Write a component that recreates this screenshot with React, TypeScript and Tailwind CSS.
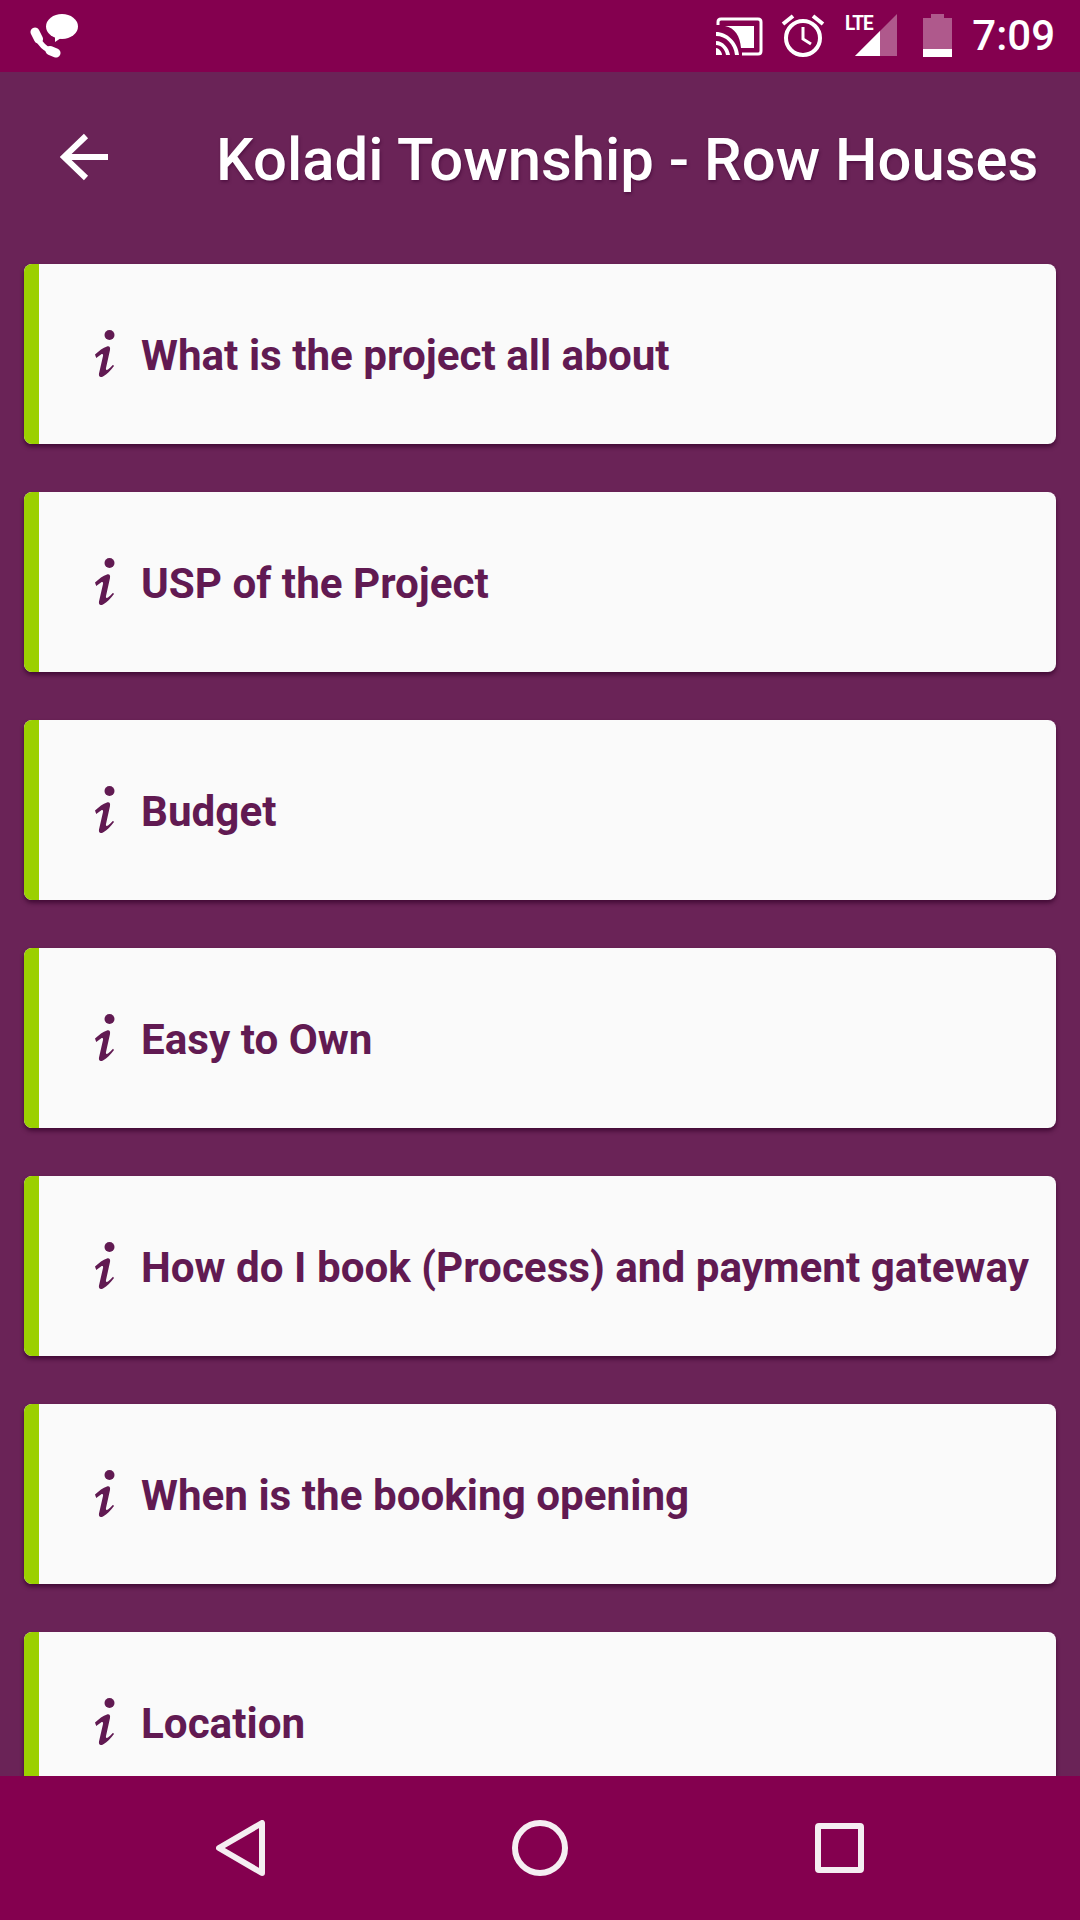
const items = [
  "What is the project all about",
  "USP of the Project",
  "Budget",
  "Easy to Own",
  "How do I book (Process) and payment gateway",
  "When is the booking opening",
  "Location",
];

function InfoIcon() {
  return (
    <svg width="24" height="50" viewBox="0 0 24 50" className="shrink-0" fill="#611a52">
      <circle cx="15.500" cy="6" r="5" />
      <path d="M1 25.500C5 22 9 18.500 13 17.500c2.600-.6 3.500 1 3 3.500L12 39c-.4 2 .6 2.500 2 1.500 1.800-1.300 3.500-3 5-4.800l1 1.300C17 41 13 45.500 9 47.500c-3 1.400-4.500 0-4-3L9 27c.4-2-.5-2.600-2-1.600-1.600 1-3.200 2.300-4.800 3.500z" />
    </svg>
  );
}

function StatusLeft() {
  return (
    <svg width="48" height="44" viewBox="0 0 48 44" fill="#fff">
      <ellipse cx="32" cy="12.500" rx="16" ry="12.500" />
      <path d="M25 19v9l9-6z" />
      <g fill="none" stroke="#fff" strokeLinecap="round">
        <path d="M5 18C8 28 15 36 26 39" strokeWidth="5.500" />
        <path d="M5 18l3.500 7" strokeWidth="9" />
        <path d="M20 36.500l6 2.500" strokeWidth="9" />
      </g>
    </svg>
  );
}

function CastIcon() {
  return (
    <svg width="47" height="39" viewBox="0 0 47 39">
      <path d="M2 8V5c0-2 1-3 3-3h37c2 0 3 1 3 3v29c0 2-1 3-3 3H26" fill="none" stroke="#fff" strokeWidth="3" />
      <path d="M9 9h29v22H25C24 19 19 11 9 9z" fill="#fff" />
      <path d="M0 15c11 0 22 10 23 23h-4C18 27 10 19 0 19zM0 24c7 0 13 7 14 14h-4c-1-6-5-10-10-10z" fill="#fff" />
      <path d="M0 31c3 0 6 4 6 7H0z" fill="#fff" />
    </svg>
  );
}

function AlarmIcon() {
  return (
    <svg width="44" height="44" viewBox="0 0 44 44" fill="none" stroke="#fff">
      <circle cx="22" cy="24" r="17" strokeWidth="4" />
      <path d="M22 13v12l8 5" strokeWidth="3" />
      <path d="M2 10 12 2M42 10 32 2" strokeWidth="4" />
    </svg>
  );
}

function SignalIcon() {
  return (
    <div className="relative h-[44px] w-[54px]">
      <span className="absolute left-0 top-0 origin-left font-['Roboto',sans-serif] text-[21px] font-bold leading-[18px] tracking-[-1px] text-white [transform:scaleX(0.9)]">
        LTE
      </span>
      <svg width="44" height="44" viewBox="0 0 44 44" className="absolute right-0 top-0">
        <path d="M0 42 42 0v42z" fill="#fff" fillOpacity="0.35" />
        <path d="M0 42 25 17v25z" fill="#fff" />
      </svg>
    </div>
  );
}

function BatteryIcon() {
  return (
    <svg width="29" height="44" viewBox="0 0 29 44">
      <path d="M8 0h13v4h8v31H0V4h8z" fill="#fff" fillOpacity="0.35" />
      <path d="M0 35h29v8H0z" fill="#fff" />
    </svg>
  );
}

export default function App() {
  return (
    <div className="flex h-[1920px] w-[1080px] flex-col overflow-hidden bg-[#6a2357] font-['Roboto',sans-serif]">
      <div className="flex h-[72px] shrink-0 items-center bg-[#84004f] pl-[30px] pr-[25px]">
        <StatusLeft />
        <div className="ml-auto flex items-center">
          <CastIcon />
          <div className="ml-[18px]">
            <AlarmIcon />
          </div>
          <div className="ml-[20px]">
            <SignalIcon />
          </div>
          <div className="ml-[24px]">
            <BatteryIcon />
          </div>
          <span className="ml-[20px] text-[42px] font-medium leading-none text-white">7:09</span>
        </div>
      </div>

      <main className="min-h-0 flex-1 overflow-hidden">
        <header className="flex h-[170px] items-center pl-[60px]">
          <svg width="48" height="48" viewBox="0 0 48 48" fill="none" stroke="#fff" strokeWidth="6">
            <path d="M48 24H5M26 3 4 24l22 21" />
          </svg>
          <h1 className="ml-[108px] pt-[5px] text-[59.850px] font-medium leading-none whitespace-nowrap text-white [text-shadow:1px_2px_3px_rgba(60,0,50,0.5)]">
            Koladi Township - Row Houses
          </h1>
        </header>

        <div className="flex flex-col gap-[48px] px-[24px] pt-[22px]">
          {items.map((item) => (
            <div
              key={item}
              className="flex h-[180px] shrink-0 items-stretch overflow-hidden rounded-lg bg-[#fafafa] shadow-[0_3px_4px_rgba(50,0,40,0.7)]"
            >
              <div className="w-[15px] shrink-0 bg-[#9bd000]" />
              <div className="flex items-center pl-[55px]">
                <InfoIcon />
                <span className="ml-[23px] pt-[5px] text-[42.200px] font-bold leading-none whitespace-nowrap text-[#611a52]">
                  {item}
                </span>
              </div>
            </div>
          ))}
        </div>
      </main>

      <nav className="flex h-[144px] shrink-0 items-center justify-center gap-[247px] bg-[#84004f]">
        <svg width="49" height="56" viewBox="0 0 49 56" fill="none" stroke="#f5eef2" strokeWidth="6" strokeLinejoin="round">
          <path d="M46 3v50L3 28z" />
        </svg>
        <svg width="56" height="56" viewBox="0 0 56 56" fill="none" stroke="#f5eef2" strokeWidth="6">
          <circle cx="28" cy="28" r="25" />
        </svg>
        <svg width="49" height="50" viewBox="0 0 49 50" fill="none" stroke="#f5eef2" strokeWidth="6" strokeLinejoin="round">
          <rect x="3" y="3" width="43" height="44" rx="1" />
        </svg>
      </nav>
    </div>
  );
}
